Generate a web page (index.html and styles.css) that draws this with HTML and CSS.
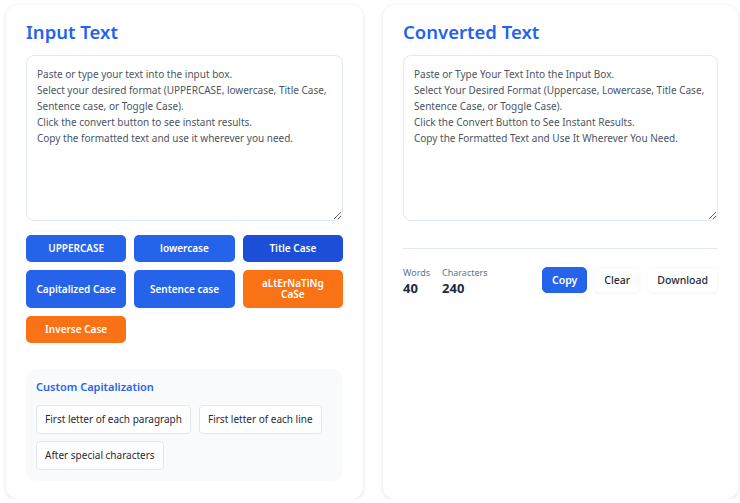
FILE: index.html
```html
<!DOCTYPE html>
<html lang="en">
<head>
    <meta charset="UTF-8">
    <meta name="viewport" content="width=device-width, initial-scale=1.0">
    <title>Case Converter</title>
    <link rel="stylesheet" href="styles.css">
</head>
<body>

    <div class="page">
        <div class="card">
            <h2 class="card-title">Input Text</h2>
            <textarea class="text-box" id="input">Paste or type your text into the input box.
Select your desired format (UPPERCASE, lowercase, Title Case, Sentence case, or Toggle Case).
Click the convert button to see instant results.
Copy the formatted text and use it wherever you need.</textarea>

            <div class="case-buttons">
                <button class="case-btn">UPPERCASE</button>
                <button class="case-btn">lowercase</button>
                <button class="case-btn active">Title Case</button>
                <button class="case-btn">Capitalized Case</button>
                <button class="case-btn">Sentence case</button>
                <button class="case-btn orange">aLtErNaTiNg CaSe</button>
                <button class="case-btn orange">Inverse Case</button>
            </div>

            <div class="custom">
                <h3 class="custom-title">Custom Capitalization</h3>
                <div class="custom-options">
                    <button class="option-btn">First letter of each paragraph</button>
                    <button class="option-btn">First letter of each line</button>
                    <button class="option-btn">After special characters</button>
                </div>
            </div>
        </div>

        <div class="card">
            <h2 class="card-title">Converted Text</h2>
            <textarea class="text-box" id="output">Paste or Type Your Text Into the Input Box.
Select Your Desired Format (Uppercase, Lowercase, Title Case, Sentence Case, or Toggle Case).
Click the Convert Button to See Instant Results.
Copy the Formatted Text and Use It Wherever You Need.</textarea>

            <div class="result-bar">
                <div class="stats">
                    <div class="stat">
                        <span class="stat-label">Words</span>
                        <span class="stat-value">40</span>
                    </div>
                    <div class="stat">
                        <span class="stat-label">Characters</span>
                        <span class="stat-value">240</span>
                    </div>
                </div>
                <div class="actions">
                    <button class="action-btn primary">Copy</button>
                    <button class="action-btn">Clear</button>
                    <button class="action-btn">Download</button>
                </div>
            </div>
        </div>
    </div>

</body>
</html>
```

FILE: styles.css
```css
body {
    font-family: 'Noto Sans', 'Open Sans', sans-serif;
    margin: 0;
    background: #ffffff;
    color: #1e293b;
}

.page {
    display: grid;
    grid-template-columns: 357px 355px;
    gap: 20px;
    padding: 5px 0 0 6px;
}

.card {
    height: 494px;
    box-sizing: border-box;
    background: #fff;
    border-radius: 12px;
    box-shadow: 0 1px 4px rgba(0, 0, 0, 0.12);
    padding: 15px 20px 20px;
}

.card-title {
    margin: 0 0 11px;
    font-size: 18.5px;
    line-height: 24px;
    font-weight: 600;
    color: #2563eb;
}

.text-box {
    display: block;
    width: 100%;
    height: 166px;
    box-sizing: border-box;
    border: 1px solid #e2e8f0;
    border-radius: 8px;
    padding: 10px;
    font-family: inherit;
    font-size: 10px;
    line-height: 16px;
    color: #4b5563;
    resize: vertical;
    margin: 0 0 14px;
}

.case-buttons {
    display: grid;
    grid-template-columns: repeat(3, 1fr);
    gap: 8px;
}

.case-btn {
    font-family: inherit;
    font-size: 10px;
    font-weight: 600;
    line-height: 11px;
    color: #fff;
    background: #2563eb;
    border: none;
    border-radius: 5px;
    padding: 8px 8px;
    cursor: pointer;
}

.case-btn.active {
    background: #1d4ed8;
}

.case-btn.orange {
    background: #f97316;
}

.custom {
    margin-top: 26px;
    background: #f8fafc;
    border-radius: 10px;
    padding: 10px 10px 11px;
}

.custom-title {
    margin: 0 0 10px;
    font-size: 11px;
    line-height: 16px;
    font-weight: 600;
    color: #2563eb;
}

.custom-options {
    display: flex;
    flex-wrap: wrap;
    gap: 7px 8px;
}

.option-btn {
    font-family: inherit;
    font-size: 10px;
    line-height: 13px;
    color: #1f2937;
    background: #fff;
    border: 1px solid #e2e8f0;
    border-radius: 4px;
    padding: 7px 8px;
    cursor: pointer;
}

.result-bar {
    margin-top: 27px;
    border-top: 1px solid #e2e8f0;
    padding-top: 18px;
    display: flex;
    justify-content: space-between;
    align-items: flex-start;
}

.stats {
    display: flex;
    gap: 12px;
}

.stat {
    display: flex;
    flex-direction: column;
}

.stat-label {
    font-size: 9px;
    line-height: 12px;
    color: #64748b;
}

.stat-value {
    font-size: 13px;
    line-height: 18px;
    font-weight: 700;
    color: #1e293b;
}

.actions {
    display: flex;
    gap: 7px;
}

.action-btn {
    font-family: inherit;
    font-size: 10.5px;
    font-weight: 500;
    line-height: 14px;
    color: #1e293b;
    background: #fff;
    border: 1px solid #f8fafc;
    border-radius: 5px;
    padding: 5px 9px;
    box-shadow: 0 1px 2px rgba(0, 0, 0, 0.04);
    cursor: pointer;
}

.action-btn.primary {
    background: #2563eb;
    border-color: #2563eb;
    color: #fff;
    font-weight: 600;
}
```
